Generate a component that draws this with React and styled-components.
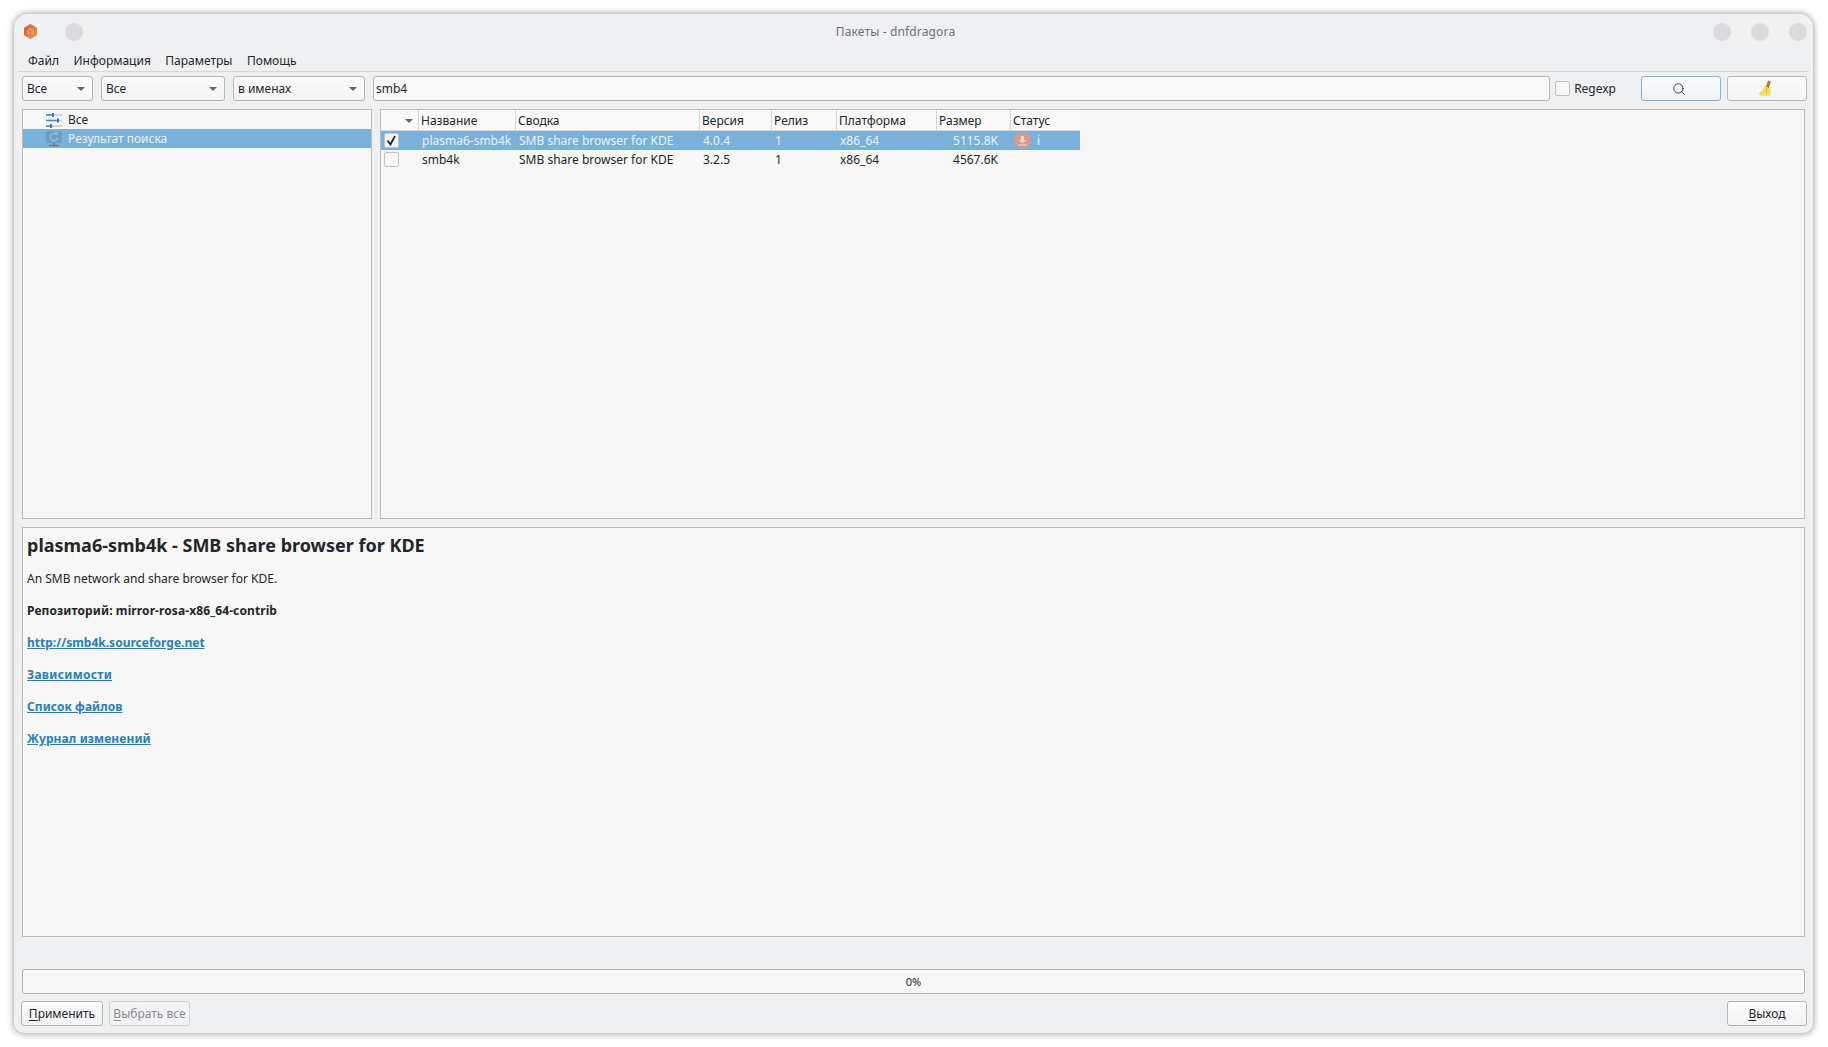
import React from "react";
import styled, { createGlobalStyle } from "styled-components";
import { Search } from "lucide-react";

const GlobalStyle = createGlobalStyle`
  html, body { margin: 0; padding: 0; background: #fff; }
  body { font-family: "Noto Sans", "Open Sans", sans-serif; font-size: 12px; color: #232629; }
`;

const Page = styled.div`
  width: 1828px;
  height: 1047px;
  padding: 14px 15px 14px 14px;
  box-sizing: border-box;
  overflow: hidden;
`;

const Window = styled.div`
  height: 100%;
  display: flex;
  flex-direction: column;
  background: #eff0f2;
  border-radius: 14px 14px 10px 10px;
  box-shadow: 0 0 6px 1px rgba(0, 0, 0, 0.35);
  padding: 0 8px 6px 8px;
  box-sizing: border-box;
`;

const TitleBar = styled.div`
  height: 35px;
  flex: none;
  display: flex;
  align-items: center;
  position: relative;
  padding: 0 0 0 2px;
  margin-right: -2px;
`;

const Title = styled.div`
  position: absolute;
  left: 0;
  right: 38px;
  text-align: center;
  font-size: 12px;
  letter-spacing: 0.15px;
  color: #6f7275;
`;

const Dot = styled.span`
  width: 18px;
  height: 18px;
  border-radius: 50%;
  background: #dcdcdd;
  flex: none;
  margin-left: ${(p) => p.$gap}px;
`;

const Spacer = styled.div`
  flex: 1;
`;

const MenuBar = styled.div`
  height: 23px;
  flex: none;
  display: flex;
  align-items: center;
  gap: 14.500px;
  border-bottom: 1px solid #d5d6d8;
  margin: 0 -4px;
  padding-top: 1px;
  box-sizing: border-box;
  padding-left: 10px;
`;

const Toolbar = styled.div`
  display: flex;
  align-items: stretch;
  height: 25px;
  margin: 4px -2px 0 0;
  flex: none;
`;

const Combo = styled.div`
  width: ${(p) => p.$w}px;
  margin-right: ${(p) => p.$mr}px;
  box-sizing: border-box;
  border: 1px solid #b4b5b7;
  border-radius: 3px;
  background: linear-gradient(#fbfbfc, #f2f3f4);
  display: flex;
  align-items: center;
  justify-content: space-between;
  padding: 0 7px 0 4px;
`;

const Caret = styled.span`
  width: 0;
  height: 0;
  border-left: 4px solid transparent;
  border-right: 4px solid transparent;
  border-top: 4px solid #63676a;
`;

const SearchInput = styled.div`
  flex: 1;
  box-sizing: border-box;
  border: 1px solid #b4b5b7;
  border-radius: 3px;
  background: #f8f8f9;
  display: flex;
  align-items: center;
  padding-left: 2px;
`;

const CheckLabel = styled.label`
  display: flex;
  align-items: center;
  gap: 4px;
  margin: 0 25px 0 5px;
`;

const Box = styled.span`
  width: 13px;
  height: 13px;
  border: 1px solid #c0c1c3;
  border-radius: 2px;
  background: ${(p) => (p.$on ? "#f4f5f6" : "#f7f7f8")};
  display: flex;
  align-items: center;
  justify-content: center;
  flex: none;
`;

const ToolButton = styled.button`
  width: 80px;
  margin-left: ${(p) => p.$ml || 0}px;
  padding: 0 4px 0 0;
  box-sizing: border-box;
  border: 1px solid ${(p) => (p.$focus ? "#7fb3d8" : "#b8b9bb")};
  border-radius: 3px;
  background: ${(p) => (p.$focus ? "linear-gradient(#fbfcfd, #eff3f7)" : "linear-gradient(#fbfbfc, #f2f3f4)")};
  display: flex;
  align-items: center;
  justify-content: center;
  color: #232629;
`;

const Panels = styled.div`
  display: flex;
  gap: 8px;
  height: 410px;
  margin-top: 8px;
  flex: none;
`;

const Panel = styled.div`
  box-sizing: border-box;
  border: 1px solid #bcbdbf;
  background: #f7f7f8;
  overflow: hidden;
  ${(p) => p.$w && `width: ${p.$w}px; flex: none;`}
  ${(p) => p.$fill && "flex: 1;"}
`;

const TreeRow = styled.div`
  height: 19px;
  display: flex;
  align-items: center;
  padding-left: 23px;
  gap: 6px;
  background: ${(p) => (p.$sel ? "#7ab1da" : "transparent")};
  color: ${(p) => (p.$sel ? "#e9f2f9" : "#232629")};
`;

const columns = "38px 97px 184px 72px 65px 100px 74px 69px";

const HeaderRow = styled.div`
  display: grid;
  grid-template-columns: ${columns};
  width: 699px;
  height: 20px;
  border-bottom: 1px solid #d9dadb;
  box-sizing: content-box;
  background: #f9f9fa;
`;

const HeaderCell = styled.div`
  display: flex;
  align-items: center;
  justify-content: ${(p) => (p.$end ? "flex-end" : "flex-start")};
  padding: 1px ${(p) => (p.$end ? "5px" : "0")} 0 ${(p) => (p.$end ? "0" : "2px")};
  border-right: 1px solid ${(p) => (p.$last ? "transparent" : "#d4d5d6")};
  box-sizing: border-box;
  white-space: nowrap;
`;

const DataRow = styled.div`
  display: grid;
  grid-template-columns: ${columns};
  width: 699px;
  height: 19px;
  background: ${(p) => (p.$sel ? "#7ab1da" : "transparent")};
  color: ${(p) => (p.$sel ? "#e9f2f9" : "#232629")};
`;

const Cell = styled.div`
  display: flex;
  align-items: center;
  gap: 6px;
  padding: 0 ${(p) => (p.$right ? "13px" : "0")} 0 ${(p) => (p.$right ? "0" : "3px")};
  justify-content: ${(p) => (p.$right ? "flex-end" : "flex-start")};
  white-space: nowrap;
  overflow: hidden;
`;

const CheckCell = styled(Cell)`
  padding: 0 0 0 3px;
`;

const StatusBadge = styled.span`
  width: 17px;
  height: 17px;
  border-radius: 50%;
  background: #d8998f;
  display: flex;
  align-items: center;
  justify-content: center;
  flex: none;
`;

const Details = styled.div`
  height: 410px;
  margin-top: 8px;
  flex: none;
  box-sizing: border-box;
  border: 1px solid #bcbdbf;
  background: #f7f7f8;
  padding: 5px 4px;
`;

const Heading = styled.h3`
  margin: 0 0 13px;
  font-size: 18px;
  line-height: 24px;
  font-weight: 700;
  color: #232629;
`;

const Para = styled.p`
  margin: 0 0 15px;
  line-height: 17px;
  font-size: 12px;
  font-weight: ${(p) => (p.$bold ? 700 : 400)};
  letter-spacing: ${(p) => (p.$bold ? "0.1px" : "0")};
`;

const DocLink = styled.a`
  color: #2980b9;
  font-weight: 700;
  text-decoration: underline;
  letter-spacing: ${(p) => p.$track || 0}px;
`;

const Progress = styled.div`
  height: 25px;
  margin-top: 32px;
  flex: none;
  box-sizing: border-box;
  border: 1px solid #afb0b2;
  border-radius: 3px;
  background: #f7f7f8;
  display: flex;
  align-items: center;
  justify-content: center;
  font-size: 11px;
`;

const Footer = styled.div`
  height: 25px;
  margin-top: 7px;
  flex: none;
  display: flex;
  gap: 6px;
  margin-left: -1px;
  margin-right: -2px;
`;

const ActionButton = styled.button`
  width: ${(p) => p.$w}px;
  padding: 0;
  box-sizing: border-box;
  font: inherit;
  border: 1px solid ${(p) => (p.disabled ? "#d0d1d2" : "#b2b3b5")};
  border-radius: 3px;
  background: ${(p) => (p.disabled ? "#f2f3f4" : "linear-gradient(#fbfbfc, #f2f3f4)")};
  color: ${(p) => (p.disabled ? "#8b8d90" : "#232629")};
  u { text-underline-offset: 2px; }
`;

const AppLogo = () => (
  <svg width="13" height="15" viewBox="0 0 13 15">
    <defs>
      <linearGradient id="logoFill" x1="0" y1="0" x2="1" y2="1">
        <stop offset="0" stopColor="#c9574a" />
        <stop offset="1" stopColor="#f59a3a" />
      </linearGradient>
    </defs>
    <path d="M6.500 0 13 3.700v7.600L6.500 15 0 11.300V3.700z" fill="url(#logoFill)" />
    <path d="M6.500 3.500 10 5.500v4l-3.500 2-3.500-2v-4z" fill="#f6b48c" fillOpacity="0.55" />
    <path d="M3 5.500 6.500 7.500 10 5.500M6.500 7.500v4" fill="none" stroke="#d9654a" strokeWidth="0.8" />
  </svg>
);

const SlidersIcon = () => (
  <svg width="16" height="16" viewBox="0 0 16 16">
    <path d="M0 3h16M0 8.500h16M0 14h16" stroke="#c6cacd" strokeWidth="1.600" />
    <path d="M0 3h7M0 8.500h12M0 14h5" stroke="#3d8fc9" strokeWidth="1.600" />
    <path d="M6 1h2v4H6zM11 6.500h2v4h-2zM4 12h2v4H4z" fill="#2c7fbc" />
  </svg>
);

const SearchResultIcon = () => (
  <svg width="16" height="16" viewBox="0 0 16 16">
    <rect x="0" y="0" width="16" height="12" fill="#6c9ec6" />
    <path d="M10.500 3.500A3.600 3.600 0 1 0 11.600 6.500" fill="none" stroke="#a3c8e4" strokeWidth="1.100" />
    <path d="M9 1.800h2.500v2.500" fill="none" stroke="#a3c8e4" strokeWidth="0.900" />
    <rect x="6.500" y="12" width="3" height="2" fill="#7d8d9a" />
    <rect x="3" y="14" width="10" height="1.200" fill="#66727c" />
  </svg>
);

const Tick = () => (
  <svg width="11" height="11" viewBox="0 0 11 11">
    <path d="M1.500 5.500 4.500 9.500 9 1" fill="none" stroke="#232629" strokeWidth="1.800" />
  </svg>
);

const DownloadGlyph = () => (
  <svg width="11" height="11" viewBox="0 0 11 11">
    <path d="M4 1h3v4h2.500L5.500 8.500 1.500 5H4z" fill="#ecd0cb" />
    <rect x="1" y="9.300" width="9" height="1.200" fill="#ecd0cb" />
  </svg>
);

const BroomIcon = () => (
  <svg width="14" height="17" viewBox="0 0 14 17">
    <path d="M10 0.500 12.800 1.500 10.800 8 7.800 7z" fill="#b07a3a" />
    <path d="M6 6 12.800 8.800C13.200 11 12.600 14 11.500 16.500L8.800 15.800 7.600 16.800 5 15.500 3 15.800 0.300 13.500C3 12.500 5 9.500 6 6z" fill="#f1e05f" />
    <path d="M8 7.500 9.500 8C9.500 10.500 9 13 8 15.500z" fill="#d8bf3c" />
  </svg>
);

const rows = [
  { sel: true, name: "plasma6-smb4k", version: "4.0.4", size: "5115.8K" },
  { sel: false, name: "smb4k", version: "3.2.5", size: "4567.6K" },
];

export default function App() {
  return (
    <>
      <GlobalStyle />
      <Page>
        <Window>
          <TitleBar>
            <Title>Пакеты - dnfdragora</Title>
            <AppLogo />
            <Dot $gap={28} />
            <Spacer />
            <Dot $gap={0} />
            <Dot $gap={20} />
            <Dot $gap={20} />
          </TitleBar>
          <MenuBar>
            <span>Файл</span>
            <span>Информация</span>
            <span>Параметры</span>
            <span>Помощь</span>
          </MenuBar>
          <Toolbar>
            <Combo $w={71} $mr={8}>Все<Caret /></Combo>
            <Combo $w={124} $mr={8}>Все<Caret /></Combo>
            <Combo $w={132} $mr={8}>в именах<Caret /></Combo>
            <SearchInput>smb4</SearchInput>
            <CheckLabel>
              <Box />
              Regexp
            </CheckLabel>
            <ToolButton $focus>
              <Search size={14} strokeWidth={1.5} />
            </ToolButton>
            <ToolButton $ml={6}>
              <BroomIcon />
            </ToolButton>
          </Toolbar>
          <Panels>
            <Panel $w={350}>
              <TreeRow>
                <SlidersIcon />
                Все
              </TreeRow>
              <TreeRow $sel>
                <SearchResultIcon />
                Результат поиска
              </TreeRow>
            </Panel>
            <Panel $fill>
              <HeaderRow>
                <HeaderCell $end>
                  <Caret />
                </HeaderCell>
                <HeaderCell>Название</HeaderCell>
                <HeaderCell>Сводка</HeaderCell>
                <HeaderCell>Версия</HeaderCell>
                <HeaderCell>Релиз</HeaderCell>
                <HeaderCell>Платформа</HeaderCell>
                <HeaderCell>Размер</HeaderCell>
                <HeaderCell $last>Статус</HeaderCell>
              </HeaderRow>
              {rows.map((row) => (
                <DataRow key={row.name} $sel={row.sel}>
                  <CheckCell>
                    <Box $on={row.sel}>{row.sel && <Tick />}</Box>
                  </CheckCell>
                  <Cell>{row.name}</Cell>
                  <Cell>SMB share browser for KDE</Cell>
                  <Cell>{row.version}</Cell>
                  <Cell>1</Cell>
                  <Cell>x86_64</Cell>
                  <Cell $right>{row.size}</Cell>
                  <Cell>
                    {row.sel && (
                      <>
                        <StatusBadge>
                          <DownloadGlyph />
                        </StatusBadge>
                        i
                      </>
                    )}
                  </Cell>
                </DataRow>
              ))}
            </Panel>
          </Panels>
          <Details>
            <Heading>plasma6-smb4k - SMB share browser for KDE</Heading>
            <Para>An SMB network and share browser for KDE.</Para>
            <Para $bold>Репозиторий: mirror-rosa-x86_64-contrib</Para>
            <Para><DocLink href="#">http://smb4k.sourceforge.net</DocLink></Para>
            <Para><DocLink href="#" $track={0.3}>Зависимости</DocLink></Para>
            <Para><DocLink href="#" $track={0.05}>Список файлов</DocLink></Para>
            <Para><DocLink href="#" $track={0.1}>Журнал изменений</DocLink></Para>
          </Details>
          <Progress>0%</Progress>
          <Footer>
            <ActionButton $w={82}><u>П</u>рименить</ActionButton>
            <ActionButton $w={81} disabled><u>В</u>ыбрать все</ActionButton>
            <Spacer />
            <ActionButton $w={80}><u>В</u>ыход</ActionButton>
          </Footer>
        </Window>
      </Page>
    </>
  );
}
